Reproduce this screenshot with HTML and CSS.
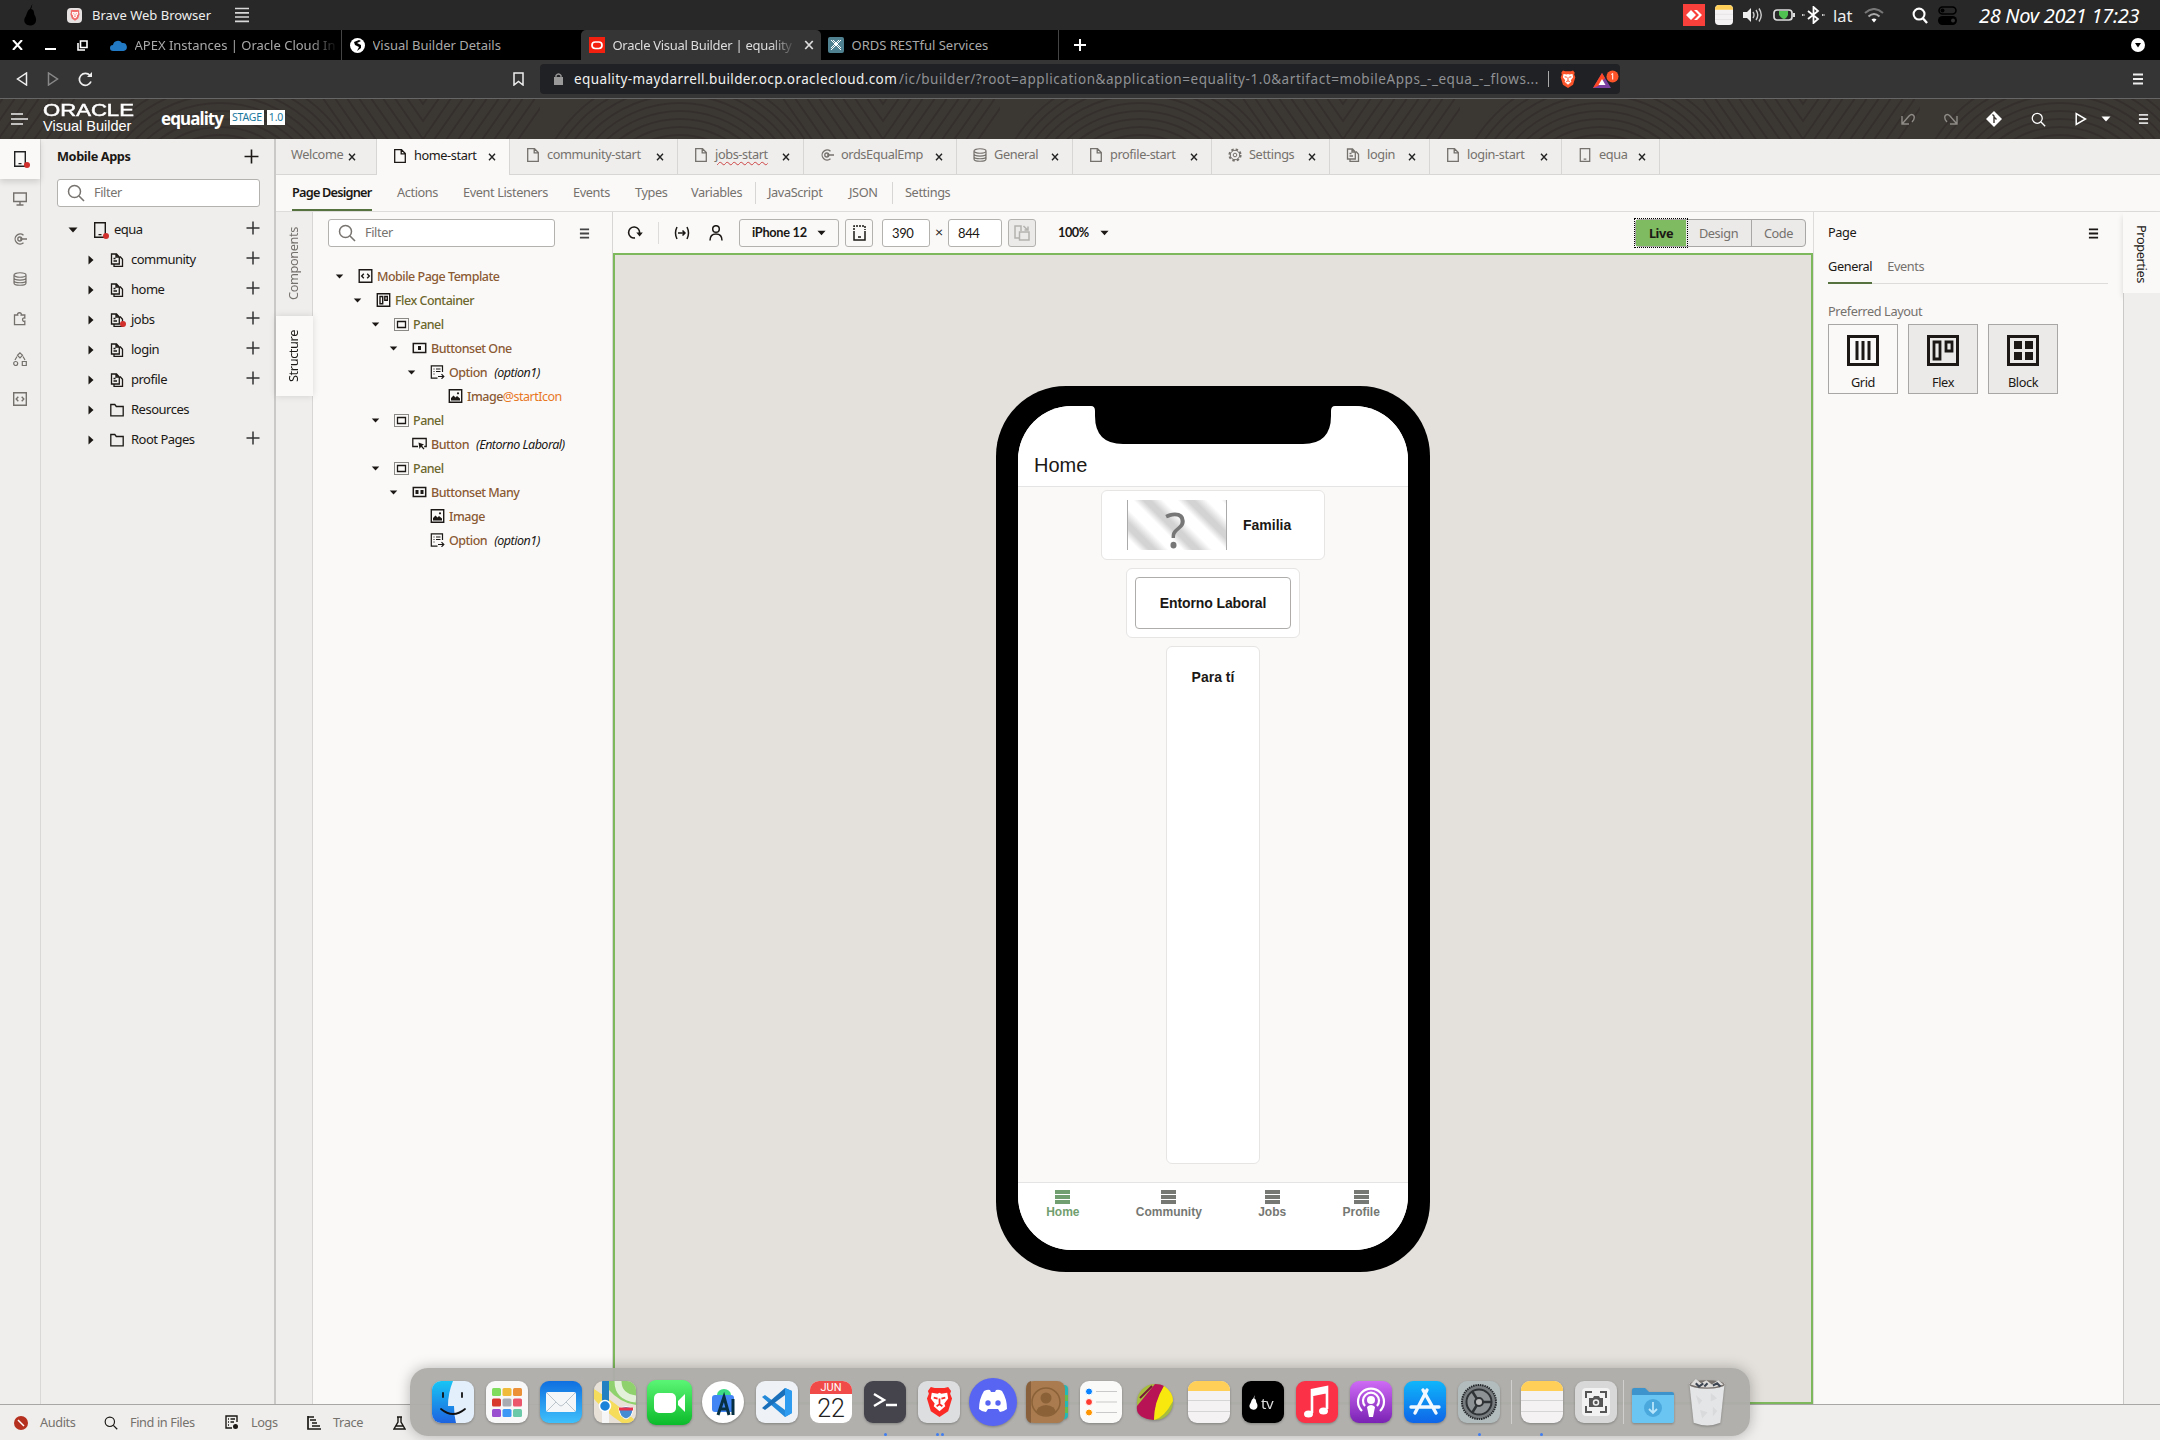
FILE: index.html
```html
<!DOCTYPE html>
<html lang="en">
<head>
<meta charset="utf-8">
<title>Oracle Visual Builder | equality</title>
<link rel="stylesheet" href="styles.css">
</head>
<body>
<svg class="defs" width="0" height="0" aria-hidden="true">
  <symbol id="page" viewBox="0 0 14 14"><path d="M1.700.7h6.800l3.800 3.800v8.800H1.700zM8.200.9v4h4" fill="none" stroke="currentColor" stroke-width="1.300"/></symbol>
  <symbol id="flow" viewBox="0 0 14 14"><path d="M1.500 1h5l2.800 3v7H1.500zM6 1v3h3M3.500 5.500h2M3.500 8h3.500M10 3.500l2.500 2.700v7.100H4v-2" fill="none" stroke="currentColor" stroke-width="1.300"/></symbol>
  <symbol id="service" viewBox="0 0 14 14"><path d="M10.500 3.300A5 5 0 1 0 10.500 10.700M7 7h7" fill="none" stroke="currentColor" stroke-width="1.300"/><circle cx="6.800" cy="7" r="2" fill="none" stroke="currentColor" stroke-width="1.300"/></symbol>
  <symbol id="data" viewBox="0 0 14 14"><path d="M1 3c0-3 12-3 12 0s-12 3-12 0v8c0 3 12 3 12 0V3M1 5.800c0 3 12 3 12 0M1 8.500c0 3 12 3 12 0" fill="none" stroke="currentColor" stroke-width="1.200"/></symbol>
  <symbol id="gear" viewBox="0 0 14 14"><circle cx="7" cy="7" r="5.600" fill="none" stroke="currentColor" stroke-width="2" stroke-dasharray="2.400 2"/><circle cx="7" cy="7" r="4.700" fill="none" stroke="currentColor"/><circle cx="7" cy="7" r="1.800" fill="none" stroke="currentColor"/></symbol>
  <symbol id="mobile" viewBox="0 0 14 18"><path d="M1.700 1.700h10.600v14.600H1.700zM5.500 13.600h3" fill="none" stroke="currentColor" stroke-width="1.400"/></symbol>
  <symbol id="folder" viewBox="0 0 14 14"><path d="M.8 12.800V1.500h4l1.500 2h6.900v9.300z" fill="none" stroke="currentColor" stroke-width="1.300"/></symbol>
  <symbol id="code" viewBox="0 0 14 14"><path d="M.7.7h12.600v12.600H.7zM5.300 4.800 3.200 7l2.100 2.200M8.700 4.800 10.800 7 8.700 9.200" fill="none" stroke="currentColor" stroke-width="1.400"/></symbol>
  <symbol id="flex" viewBox="0 0 14 14"><path d="M.8.8h12.400v12.400H.8zM3.500 3.500h2.700v7.300H3.500zM8.300 3.500h2.500v3.800H8.300z" fill="none" stroke="currentColor" stroke-width="1.400"/></symbol>
  <symbol id="panel" viewBox="0 0 15 13"><path d="M.5.5h14v12H.5z" fill="none" stroke="currentColor" stroke-dasharray="1 1"/><path d="M3.500 3.500h8v6h-8z" fill="none" stroke="currentColor" stroke-width="1.300"/></symbol>
  <symbol id="bone" viewBox="0 0 14 14"><path d="M.8 2.500h12.400v9H.8z" fill="none" stroke="currentColor" stroke-width="1.500"/><path d="M5.500 5h3v4h-3z"/></symbol>
  <symbol id="bmany" viewBox="0 0 14 14"><path d="M.8 2.500h12.400v9H.8z" fill="none" stroke="currentColor" stroke-width="1.500"/><path d="M3 5h3v4H3zM8 5h3v4H8z"/></symbol>
  <symbol id="option" viewBox="0 0 14 14"><path d="M12 7V.8H.8v12.400H7M3 4h1M5.500 4H10M3 6.500h1M5.500 6.500H10M3 9h1M7.500 11.500H13M11 9.200l2.300 2.300-2.300 2.300" fill="none" stroke="currentColor" stroke-width="1.200"/></symbol>
  <symbol id="image" viewBox="0 0 14 14"><path d="M.8.8h12.400v12.400H.8z" fill="none" stroke="currentColor" stroke-width="1.400"/><path d="M2.500 11.500V9l2.500-2.500 2 2L8.500 7l3 2.500v2z"/><circle cx="9.500" cy="4.300" r="1.100"/></symbol>
  <symbol id="button" viewBox="0 0 15 14"><path d="M6 9.500H.8v-8h13.400v8h-2" fill="none" stroke="currentColor" stroke-width="1.300"/><path d="m6.500 5.500 5.500 2-2 1.300 2.500 3-1 .8-2.500-2.800L7.500 12z"/></symbol>
  <symbol id="search" viewBox="0 0 18 18"><circle cx="7.500" cy="7.500" r="6" fill="none" stroke="currentColor" stroke-width="1.500"/><path d="m12 12 5 5" stroke="currentColor" stroke-width="1.600"/></symbol>
  <symbol id="menu" viewBox="0 0 12 12"><path d="M1 1.500h10M1 6h10M1 10.500h10" stroke="currentColor" stroke-width="2"/></symbol>
  <symbol id="down" viewBox="0 0 10 6"><path d="M.5.5h9L5 5.500z"/></symbol>
  <symbol id="right" viewBox="0 0 6 10"><path d="M.5.500v9L5.500 5z"/></symbol>
  <symbol id="plus" viewBox="0 0 14 14"><path d="M7 .5v13M.5 7h13" stroke="currentColor" stroke-width="1.500"/></symbol>
  <symbol id="x" viewBox="0 0 8 8"><path d="m1 .8 6 6.400M7 .8 1 7.200" stroke="currentColor" stroke-width="1.400"/></symbol>
  <symbol id="notes" viewBox="0 0 42 42"><rect width="42" height="42" rx="9" fill="#f4f2f3"/><path d="M0 10a9 9 0 0 1 9-10h24a9 9 0 0 1 9 10z" fill="#ffcf57"/><path d="M0 19.500h42M0 30.500h42" stroke="#d6d5d6"/></symbol>
  <symbol id="lion" viewBox="0 0 28 32"><path d="m5 1 4 1h10l4-1 3 4-1 3 2 5-4 13-9 6-9-6L1 13l2-5-1-3z"/><path d="m6 7 6 1 2-1 2 1 6-1 1 6-4 5 1 3-6 5-6-5 1-3-4-5z" fill="#fff"/><path d="m8 12 4 1M20 12l-4 1M14 13v6m-3 2 3-2 3 2" stroke="currentColor" stroke-width="1.800" fill="none"/></symbol>
  <symbol id="pear" viewBox="0 0 14 22"><path d="M8.500 0C7.500 2 8 4 7 5c3 0 3 4 3.500 6C13 14 13 21 7 21.500S-1 17 1 13.500C3 11 3 6 6 5 7 3 7 2 8.500 0z"/></symbol>
</svg>

<header class="osbar">
  <svg class="pear" width="14" height="22"><use href="#pear"/></svg>
  <span class="oslogo"><svg width="10" height="12"><use href="#lion"/></svg></span>
  <span class="osapp">Brave Web Browser</span>
  <svg width="14" height="16" viewBox="0 0 14 16"><path d="M0 1.500h14M0 5.800h14M0 10h14M0 14.300h14" stroke="#d8d8d8" stroke-width="1.700"/></svg>
  <div class="tray">
    <svg width="22" height="22" viewBox="0 0 22 22"><path fill="#f9403a" d="M0 0h22v22H0z"/><path d="m3 11 5-5 5 5-5 5zM11 6l5 5-5 5h3l5-5-5-5z" fill="#fff"/></svg>
    <svg width="18" height="20" preserveAspectRatio="none" viewBox="0 0 42 42"><use href="#notes" width="42" height="42"/></svg>
    <svg width="20" height="16" viewBox="0 0 20 16"><path d="M0 5h4l4-4v14l-4-4H0z" fill="#eee"/><path d="M10 5q2 3 0 6M13 3q3.500 5 0 10M16 1.500q4.500 6.500 0 13" stroke="#ccc" stroke-width="1.400" fill="none"/></svg>
    <svg width="23" height="14" viewBox="0 0 23 14"><rect x="1" y="2" width="18" height="10" rx="3" fill="none" stroke="#ddd" stroke-width="1.700"/><path d="M21 5v4" stroke="#ddd" stroke-width="2"/><path d="M6 3h9v4q-2 4-4 4T6 7z" fill="#4fc252"/></svg>
    <svg class="bt" width="23" height="18" viewBox="0 0 23 18"><path d="m6 5 10 8-4.500 4V1L16 5 6 13" fill="none" stroke="#fff" stroke-width="1.800"/><path d="M0 9h3M20 9h3" stroke="#ccc" stroke-width="2" stroke-dasharray="1.500 1"/></svg>
    <span class="lat">lat</span>
    <svg class="wifi" width="20" height="15" viewBox="0 0 20 15"><path d="M1 5q9-8 18 0" stroke="#777" stroke-width="2" fill="none"/><path d="M4.500 8.500q5.500-5 11 0" stroke="#aaa" stroke-width="2" fill="none"/><path d="M7.500 11.500q2.500-2 5 0L10 14.500z" fill="#fff"/></svg>
    <svg class="ossearch" width="16" height="17" viewBox="0 0 17 18"><circle cx="7.500" cy="7.500" r="5.800" fill="none" stroke="#fff" stroke-width="2.200"/><path d="m11.500 12 4.500 5" stroke="#fff" stroke-width="2.500"/></svg>
    <svg width="19" height="19" viewBox="0 0 19 19"><rect x="1" y="1" width="17" height="7" rx="3.500" fill="none" stroke="#000" stroke-width="1.600"/><circle cx="4.500" cy="4.500" r="2" fill="#000"/><rect y="10" width="19" height="9" rx="4.500" fill="#000"/><circle cx="15" cy="14.500" r="2" fill="#333"/></svg>
    <time class="clock">28 Nov 2021 17:23</time>
  </div>
</header>

<nav class="tabstrip">
  <svg class="win" width="11" height="10" viewBox="0 0 11 10"><path d="m1 0 9 10M10 0 1 10" stroke="#fff" stroke-width="2"/></svg>
  <svg class="win" width="11" height="10" viewBox="0 0 11 10"><path d="M0 9h11" stroke="#fff" stroke-width="2"/></svg>
  <svg class="win" width="11" height="11" viewBox="0 0 11 11"><path d="M3.500 1h6.500v6.500H3.500zM1 3v7h7" fill="none" stroke="#fff" stroke-width="1.600"/></svg>
  <div class="btab first"><svg width="17" height="11" viewBox="0 0 17 11"><path d="M3 11a3 3 0 0 1 0-6 5 5 0 0 1 9-2 4 4 0 0 1 1.500 8z" fill="#2279c4"/></svg><span class="fade">APEX Instances | Oracle Cloud In</span></div>
  <div class="btab second"><svg width="15" height="15" viewBox="0 0 15 15"><circle cx="7.500" cy="7.500" r="7.500" fill="#fff"/><path d="M9 2 4 4l1 3 4 2-2 4 4-3V7L7 5l4-2z" fill="#000"/></svg><span>Visual Builder Details</span></div>
  <div class="btab current"><svg width="16" height="16" viewBox="0 0 16 16"><path fill="#f4200f" d="M0 0h16v16H0z"/><rect x="3" y="5" width="10" height="6.500" rx="3.200" fill="none" stroke="#fff" stroke-width="1.700"/></svg><span class="fade">Oracle Visual Builder | equality</span><svg width="10" height="10"><use href="#x"/></svg></div>
  <div class="btab last"><svg width="16" height="16" viewBox="0 0 16 16"><rect width="16" height="16" rx="2" fill="#4f8190"/><path d="m3 3 10 10M13 3 3 13M5 3l8 8M3 11l8-8" stroke="#fff" fill="none"/></svg><span>ORDS RESTful Services</span></div>
  <svg class="newtab" width="12" height="12" viewBox="0 0 12 12"><path d="M6 0v12M0 6h12" stroke="#fff" stroke-width="2"/></svg>
  <svg class="tabmenu" width="14" height="14" viewBox="0 0 14 14"><circle cx="7" cy="7" r="7" fill="#fff"/><path d="M4 5h6L7 9.500z" fill="#000"/></svg>
</nav>

<div class="toolbar">
  <svg width="12" height="14" viewBox="0 0 12 14"><path d="M10.500 1v12L1.500 7z" fill="none" stroke="#eee" stroke-width="1.500"/></svg>
  <svg width="12" height="14" viewBox="0 0 12 14"><path d="M1.500 1v12l9-6z" fill="none" stroke="#888" stroke-width="1.500"/></svg>
  <svg width="15" height="15" viewBox="0 0 15 15"><path d="M13 9.500A6 6 0 1 1 12 3.500" fill="none" stroke="#eee" stroke-width="1.700"/><path d="M9 5h5V0z" fill="#eee"/></svg>
  <svg class="mark" width="11" height="14" viewBox="0 0 11 14"><path d="M1 1h9v12L5.500 9.500 1 13z" fill="none" stroke="#eee" stroke-width="1.500"/></svg>
  <div class="url">
    <svg width="9" height="12" viewBox="0 0 9 12"><path d="M0 4h9v8H0z" fill="#999"/><path d="M2 5V2.500q2.500-3 5 0V5" stroke="#999" stroke-width="1.300" fill="none"/></svg>
    <span class="host">equality-maydarrell.builder.ocp.oraclecloud.com</span><span class="path">/ic/builder/?root=application&amp;application=equality-1.0&amp;artifact=mobileApps_-_equa_-_flows...</span>
    <i class="bar"></i>
    <svg class="brave" width="16" height="18"><use href="#lion"/></svg>
    <svg class="bat" width="26" height="19" viewBox="0 0 26 19"><path d="m0 18 9-15 9 15z" fill="#7b3fa0"/><path d="M0 18 9 3l3 5-7 8z" fill="#ff4724"/><path d="m5.500 15 3.500-6 3.500 6z" fill="#fff"/><circle cx="19.500" cy="6.500" r="6" fill="#fb542b"/><path d="M19.700 9.500v-6l-1.500 1" stroke="#fff" fill="none"/></svg>
  </div>
  <svg class="bmenu" width="12" height="12"><use href="#menu"/></svg>
</div>

<header class="apphead">
  <svg class="waves" width="2160" height="40" viewBox="0 0 2160 40" aria-hidden="true">
    <defs><pattern id="w" x="80" width="460" height="40" patternUnits="userSpaceOnUse"><g fill="none" stroke="#342f2c" stroke-width="2"><circle cx="140" cy="120" r="84"/><circle cx="140" cy="120" r="92"/><circle cx="140" cy="120" r="100"/><circle cx="140" cy="120" r="108"/><circle cx="140" cy="120" r="116"/><circle cx="140" cy="120" r="124"/><circle cx="140" cy="120" r="132"/><circle cx="140" cy="120" r="140"/><circle cx="140" cy="120" r="148"/><path d="m240-5 35 50M252-5l35 50M264-5l35 50M276-5l35 50M288-5l35 50M300-5l35 50M312-5l31 45 31-45M324-5l19 27 19-27M336-5l7 10 7-10M386-5l-35 50M398-5l-35 50M410-5l-35 50M422-5l-35 50M434-5l-35 50M446-5l-35 50M458-5l-35 50M470-5l-35 50"/></g></pattern></defs>
    <rect width="2160" height="40" fill="url(#w)"/>
  </svg>
  <svg class="burger" width="17" height="12" viewBox="0 0 17 12"><path d="M0 1h12M0 6h17M0 11h12" stroke="#eee" stroke-width="1.500"/></svg>
  <div class="brand"><b>ORACLE</b><span>Visual Builder</span></div>
  <h1>equality</h1><span class="badge">STAGE</span><span class="badge">1.0</span>
  <div class="actions">
    <svg width="14" height="12" viewBox="0 0 14 12"><path d="M1 3v8h7M1.500 10.500 8 3q3-3 5 0 1 3-2 6" fill="none" stroke="#8f8b87" stroke-width="1.400"/></svg>
    <svg width="14" height="12" viewBox="0 0 14 12"><path d="M13 3v8H6M12.500 10.500 6 3Q3 0 1 3q-1 3 2 6" fill="none" stroke="#8f8b87" stroke-width="1.400"/></svg>
    <svg width="16" height="16" viewBox="0 0 16 16"><path d="m8 0 8 8-8 8-8-8z" fill="#fff"/><path d="M6.500 3.500 8 5v7M8 6l2.500 2.500" fill="none" stroke="#3a3632" stroke-width="1.400"/></svg>
    <svg width="15" height="15"><use href="#search"/></svg>
    <svg width="12" height="14" viewBox="0 0 12 14"><path d="M1.200 1.500v11L10.500 7z" fill="none" stroke="#fff" stroke-width="1.500"/></svg>
    <svg class="drop" width="10" height="6"><use href="#down"/></svg>
    <svg class="more" width="11" height="12"><use href="#menu"/></svg>
  </div>
</header>

<main class="work">
  <nav class="rail">
    <span class="on"><svg width="14" height="18"><use href="#mobile"/></svg><i class="dot"></i></span>
    <span><svg width="14" height="14" viewBox="0 0 14 14"><path d="M.7 1h12.600v8.500H.7zM7 9.500V13M3.500 13h7" fill="none" stroke="currentColor" stroke-width="1.400"/></svg></span>
    <span><svg width="14" height="14"><use href="#service"/></svg></span>
    <span><svg width="14" height="14"><use href="#data"/></svg></span>
    <span><svg width="14" height="14" viewBox="0 0 14 14"><path d="M1.500 3h3.200c-1-3 4.500-3 3.500 0h3.600v3c-3-.8-3 4 0 3.200v3.500H1.500z" fill="none" stroke="currentColor" stroke-width="1.300"/></svg></span>
    <span><svg width="14" height="14" viewBox="0 0 14 14"><path d="m7 .8 2.500 2.500L7 5.800 4.500 3.300zM9.300 9.500h4v4h-4zM4 4.500 2 8M10 4.500 12 8" fill="none" stroke="currentColor" stroke-width="1.200"/><circle cx="2.700" cy="11.500" r="2" fill="none" stroke="currentColor" stroke-width="1.200"/></svg></span>
    <span><svg width="14" height="14"><use href="#code"/></svg></span>
  </nav>

  <aside class="apps">
    <div class="appstitle"><b>Mobile Apps</b><svg width="15" height="15"><use href="#plus"/></svg></div>
    <div class="filter"><svg width="18" height="18"><use href="#search"/></svg>Filter</div>
    <ul class="tree">
      <li class="root"><svg class="tw" width="10" height="6"><use href="#down"/></svg><span class="ic"><svg width="14" height="18"><use href="#mobile"/></svg><i class="dot"></i></span>equa<svg class="add" width="14" height="14"><use href="#plus"/></svg></li>
      <li><svg class="tw" width="6" height="10"><use href="#right"/></svg><span class="ic"><svg width="14" height="14"><use href="#flow"/></svg></span>community<svg class="add" width="14" height="14"><use href="#plus"/></svg></li>
      <li><svg class="tw" width="6" height="10"><use href="#right"/></svg><span class="ic"><svg width="14" height="14"><use href="#flow"/></svg></span>home<svg class="add" width="14" height="14"><use href="#plus"/></svg></li>
      <li><svg class="tw" width="6" height="10"><use href="#right"/></svg><span class="ic"><svg width="14" height="14"><use href="#flow"/></svg><i class="dot"></i></span>jobs<svg class="add" width="14" height="14"><use href="#plus"/></svg></li>
      <li><svg class="tw" width="6" height="10"><use href="#right"/></svg><span class="ic"><svg width="14" height="14"><use href="#flow"/></svg></span>login<svg class="add" width="14" height="14"><use href="#plus"/></svg></li>
      <li><svg class="tw" width="6" height="10"><use href="#right"/></svg><span class="ic"><svg width="14" height="14"><use href="#flow"/></svg></span>profile<svg class="add" width="14" height="14"><use href="#plus"/></svg></li>
      <li><svg class="tw" width="6" height="10"><use href="#right"/></svg><span class="ic"><svg width="14" height="14"><use href="#folder"/></svg></span>Resources</li>
      <li><svg class="tw" width="6" height="10"><use href="#right"/></svg><span class="ic"><svg width="14" height="14"><use href="#folder"/></svg></span>Root Pages<svg class="add" width="14" height="14"><use href="#plus"/></svg></li>
    </ul>
  </aside>

  <section class="editor">
    <nav class="etabs">
      <span class="t1">Welcome<svg class="x" width="8" height="8"><use href="#x"/></svg></span>
      <span class="t2 active"><svg width="14" height="14"><use href="#page"/></svg>home-start<svg class="x" width="8" height="8"><use href="#x"/></svg></span>
      <span class="t3"><svg width="14" height="14"><use href="#page"/></svg>community-start<svg class="x" width="8" height="8"><use href="#x"/></svg></span>
      <span class="t4"><svg width="14" height="14"><use href="#page"/></svg><u>jobs-start</u><svg class="x" width="8" height="8"><use href="#x"/></svg></span>
      <span class="t5"><svg width="14" height="14"><use href="#service"/></svg>ordsEqualEmp<svg class="x" width="8" height="8"><use href="#x"/></svg></span>
      <span class="t6"><svg width="14" height="14"><use href="#data"/></svg>General<svg class="x" width="8" height="8"><use href="#x"/></svg></span>
      <span class="t7"><svg width="14" height="14"><use href="#page"/></svg>profile-start<svg class="x" width="8" height="8"><use href="#x"/></svg></span>
      <span class="t8"><svg width="14" height="14"><use href="#gear"/></svg>Settings<svg class="x" width="8" height="8"><use href="#x"/></svg></span>
      <span class="t9"><svg width="14" height="14"><use href="#flow"/></svg>login<svg class="x" width="8" height="8"><use href="#x"/></svg></span>
      <span class="t10"><svg width="14" height="14"><use href="#page"/></svg>login-start<svg class="x" width="8" height="8"><use href="#x"/></svg></span>
      <span class="t11"><svg width="14" height="16"><use href="#mobile"/></svg>equa<svg class="x" width="8" height="8"><use href="#x"/></svg></span>
    </nav>
    <nav class="subtabs">
      <span class="s1 on">Page Designer</span><span class="s2">Actions</span><span class="s3">Event Listeners</span><span class="s4">Events</span><span class="s5">Types</span><span class="s6">Variables</span><i></i><span class="s7">JavaScript</span><span class="s8">JSON</span><i></i><span class="s9">Settings</span>
    </nav>
    <div class="panes">
      <nav class="vtabs"><span class="comp">Components</span><span class="struct">Structure</span><div class="rest"></div></nav>
      <aside class="structure">
        <div class="sfilter"><div class="filter"><svg width="18" height="18"><use href="#search"/></svg>Filter</div><svg class="smenu" width="11" height="11"><use href="#menu"/></svg></div>
        <ul class="stree">
          <li class="l0"><svg class="tw" width="9" height="5"><use href="#down"/></svg><svg class="i" width="14" height="14"><use href="#code"/></svg>Mobile Page Template</li>
          <li class="l1 olive"><svg class="tw" width="9" height="5"><use href="#down"/></svg><svg class="i" width="14" height="14"><use href="#flex"/></svg>Flex Container</li>
          <li class="l2 olive"><svg class="tw" width="9" height="5"><use href="#down"/></svg><svg class="i" width="15" height="13"><use href="#panel"/></svg>Panel</li>
          <li class="l3"><svg class="tw" width="9" height="5"><use href="#down"/></svg><svg class="i" width="14" height="14"><use href="#bone"/></svg>Buttonset One</li>
          <li class="l4"><svg class="tw" width="9" height="5"><use href="#down"/></svg><svg class="i" width="14" height="14"><use href="#option"/></svg>Option<em>(option1)</em></li>
          <li class="l5"><b class="tw"></b><svg class="i" width="14" height="14"><use href="#image"/></svg>Image<span class="slot">@startIcon</span></li>
          <li class="l2 olive"><svg class="tw" width="9" height="5"><use href="#down"/></svg><svg class="i" width="15" height="13"><use href="#panel"/></svg>Panel</li>
          <li class="l3"><b class="tw"></b><svg class="i" width="15" height="14"><use href="#button"/></svg>Button<em>(Entorno Laboral)</em></li>
          <li class="l2 olive"><svg class="tw" width="9" height="5"><use href="#down"/></svg><svg class="i" width="15" height="13"><use href="#panel"/></svg>Panel</li>
          <li class="l3"><svg class="tw" width="9" height="5"><use href="#down"/></svg><svg class="i" width="14" height="14"><use href="#bmany"/></svg>Buttonset Many</li>
          <li class="l4"><b class="tw"></b><svg class="i" width="14" height="14"><use href="#image"/></svg>Image</li>
          <li class="l4"><b class="tw"></b><svg class="i" width="14" height="14"><use href="#option"/></svg>Option<em>(option1)</em></li>
        </ul>
      </aside>
      <section class="design">
        <div class="dbar">
          <svg class="reload" width="16" height="15" viewBox="0 0 16 15"><path d="M8 12.900A5.500 5.500 0 1 1 12.500 8.500" fill="none" stroke="currentColor" stroke-width="1.600"/><path d="M9.300 7.500h6.500l-3.200 4z"/></svg>
          <i class="sep"></i>
          <svg class="arrows" width="16" height="14" viewBox="0 0 16 14"><path d="M3 1Q0 7 3 13M13 1q3 6 0 12M4 7h7M8.500 4.500 11 7 8.500 9.500" fill="none" stroke="currentColor" stroke-width="1.500"/></svg>
          <svg class="person" width="14" height="16" viewBox="0 0 14 16"><circle cx="7" cy="4" r="3.300" fill="none" stroke="currentColor" stroke-width="1.500"/><path d="M1 15.500q0-6.500 6-6.500t6 6.500" fill="none" stroke="currentColor" stroke-width="1.500"/></svg>
          <span class="select">iPhone 12<svg width="9" height="6"><use href="#down"/></svg></span>
          <span class="sq"><svg width="13" height="16" viewBox="0 0 13 16"><path d="M1 6v9h11V6M5 12h3" fill="none" stroke="currentColor" stroke-width="1.500"/><path d="M1 5V1h11v4" fill="none" stroke="currentColor" stroke-width="1.500" stroke-dasharray="2 1"/></svg></span>
          <span class="num">390</span><span class="times">×</span><span class="num wide">844</span>
          <span class="sq off"><svg width="16" height="16" viewBox="0 0 16 16"><path d="M6 13H1V1h6v5M5.500 7h9.500v8H5.500zM9.500 1l4 4M14 1.500V5h-3.500" fill="none" stroke="currentColor" stroke-width="1.500"/></svg></span>
          <span class="zoom">100%</span><svg width="9" height="6"><use href="#down"/></svg>
          <div class="modes"><b>Live</b><span>Design</span><span>Code</span></div>
        </div>
        <div class="canvas">
          <div class="phone"><div class="screen">
            <div class="phead"><svg class="notch" width="244" height="38" viewBox="0 0 244 38"><path d="M0 0h244q-4 0-4 5v5q0 28-28 28H32Q4 38 4 10V5q0-5-4-5z" fill="#000"/></svg><span>Home</span></div>
            <div class="pbody">
              <div class="card c1"><div class="missing">?</div>Familia</div>
              <div class="card c2"><span>Entorno Laboral</span></div>
              <div class="card c3">Para tí</div>
            </div>
            <nav class="ptabs">
              <span class="on"><svg width="15" height="14" viewBox="0 0 15 14"><path d="M0 0h15v4H0zM0 5h15v4H0zM0 10h15v4H0z"/></svg>Home</span>
              <span><svg width="15" height="14" viewBox="0 0 15 14"><path d="M0 0h15v4H0zM0 5h15v4H0zM0 10h15v4H0z"/></svg>Community</span>
              <span><svg width="15" height="14" viewBox="0 0 15 14"><path d="M0 0h15v4H0zM0 5h15v4H0zM0 10h15v4H0z"/></svg>Jobs</span>
              <span><svg width="15" height="14" viewBox="0 0 15 14"><path d="M0 0h15v4H0zM0 5h15v4H0zM0 10h15v4H0z"/></svg>Profile</span>
            </nav>
          </div></div>
        </div>
      </section>
      <aside class="props">
        <div class="ptitle">Page<svg width="11" height="11"><use href="#menu"/></svg></div>
        <nav class="pnav"><span class="on">General</span><span>Events</span></nav>
        <label>Preferred Layout</label>
        <div class="layouts">
          <span class="sel"><svg width="32" height="31" viewBox="0 0 32 31"><path d="M1.500 1.500h29v28h-29z" fill="none" stroke="currentColor" stroke-width="3"/><path d="M10 6v19M16 6v19M22 6v19" stroke="currentColor" stroke-width="3"/></svg>Grid</span>
          <span><svg width="32" height="31" viewBox="0 0 32 31"><path d="M1.500 1.500h29v28h-29z" fill="none" stroke="currentColor" stroke-width="3"/><path d="M7 7h6v17H7zM19 7h6v9h-6z" fill="none" stroke="currentColor" stroke-width="2.800"/></svg>Flex</span>
          <span><svg width="32" height="31" viewBox="0 0 32 31"><path d="M1.500 1.500h29v28h-29z" fill="none" stroke="currentColor" stroke-width="3"/><path d="M7 6h8v8H7zM18 6h8v8h-8zM7 17h8v8H7zM18 17h8v8h-8z"/></svg>Block</span>
        </div>
      </aside>
      <nav class="ptab"><span>Properties</span><div></div></nav>
    </div>
  </section>
</main>

<footer class="status">
  <svg width="14" height="14" viewBox="0 0 14 14"><circle cx="7" cy="7" r="7" fill="#b5301f"/><path d="m4 4 6 6" stroke="#fff" stroke-width="1.500"/></svg><span class="f1">Audits</span>
  <svg width="14" height="14"><use href="#search"/></svg><span class="f2">Find in Files</span>
  <svg width="14" height="15" viewBox="0 0 14 15"><path d="M12 7V1H1v12h6M3 4h1M5.500 4H10M3 7h1M5.500 7H9M3 10h1" fill="none" stroke="currentColor" stroke-width="1.400"/><circle cx="10.500" cy="11.500" r="2.500"/></svg><span class="f3">Logs</span>
  <svg width="14" height="14" viewBox="0 0 14 14"><path d="M1 0v13h13M1 1h6M3 4h6M5 7h5M5 10h8" fill="none" stroke="currentColor" stroke-width="1.700"/></svg><span class="f4">Trace</span>
  <svg width="13" height="14" viewBox="0 0 13 14"><path d="M4 1h5M5 1v5l-4 7h11L8 6V1M3 10h7" fill="none" stroke="currentColor" stroke-width="1.400"/></svg>
</footer>

<nav class="dock">
  <span><svg viewBox="0 0 42 42"><defs><linearGradient id="fb" x2="0" y2="1"><stop stop-color="#18c5f5"/><stop offset="1" stop-color="#1d63df"/></linearGradient><linearGradient id="mb" x2="0" y2="1"><stop stop-color="#0f6fe0"/><stop offset="1" stop-color="#3fc0fb"/></linearGradient><linearGradient id="gb" x2="0" y2="1"><stop stop-color="#5bf575"/><stop offset="1" stop-color="#0bbb2a"/></linearGradient><linearGradient id="pb" x2="0" y2="1"><stop stop-color="#cf6bf5"/><stop offset="1" stop-color="#7a22b4"/></linearGradient><linearGradient id="ab" x2="0" y2="1"><stop stop-color="#0fb6fb"/><stop offset="1" stop-color="#0f65e8"/></linearGradient><clipPath id="r"><rect width="42" height="42" rx="9"/></clipPath></defs><g clip-path="url(#r)"><path fill="#e4effc" d="M0 0h42v42H0z"/><path d="M0 0h21q-5 12-5 25h6q0 9 2 17H0z" fill="url(#fb)"/></g><path d="M11 12v4M30 12v4M9 28q12 10 24 0" stroke="#111" stroke-width="1.800" fill="none" stroke-linecap="round"/></svg></span>
  <span><svg viewBox="0 0 42 42"><rect width="42" height="42" rx="9" fill="#f8f8f9"/><rect x="6" y="7" width="9" height="8" rx="1.500" fill="#7fdc5c"/><rect x="16.500" y="7" width="9" height="8" rx="1.500" fill="#f0bb3a"/><rect x="27" y="7" width="9" height="8" rx="1.500" fill="#ec9138"/><rect x="6" y="17.500" width="9" height="8" rx="1.500" fill="#d8382c"/><rect x="16.500" y="17.500" width="9" height="8" rx="1.500" fill="#a8acb2"/><rect x="27" y="17.500" width="9" height="8" rx="1.500" fill="#ec566c"/><rect x="6" y="28" width="9" height="8" rx="1.500" fill="#9a4fd0"/><rect x="16.500" y="28" width="9" height="8" rx="1.500" fill="#3c97f5"/><rect x="27" y="28" width="9" height="8" rx="1.500" fill="#69c9a8"/></svg></span>
  <span><svg viewBox="0 0 42 42"><rect width="42" height="42" rx="9" fill="url(#mb)"/><rect x="6" y="11" width="30" height="20" rx="2" fill="#f4f6f8"/><path d="m7 12 12 12q2 2 4 0l12-12M7 30l9-9M35 30l-9-9" fill="none" stroke="#bcc4cc"/></svg></span>
  <span><svg viewBox="0 0 42 42"><g clip-path="url(#r)"><path fill="#e8e1d8" d="M0 0h42v42H0z"/><path d="M14 0h28v24Q26 22 14 8z" fill="#8fd16c"/><path d="M24 0q0 16 18 18" stroke="#e3f0da" stroke-width="7" fill="none"/><path d="M0 8q22 14 42 32v2H28Q10 30 0 18z" fill="#f5dc5a"/><path d="M8 0h7v42H8z" fill="#f6f6f6"/><path d="M8 0h7v25H8z" fill="#2180c2"/></g><circle cx="11" cy="25" r="5.500" fill="#1d85d9" stroke="#fff" stroke-width="1.500"/><path d="M25 27q7-3 14 0 0 9-7 11-7-2-7-11z" fill="#438bd3" stroke="#fff"/><path d="M25 28h14" stroke="#e6324d" stroke-width="3"/></svg></span>
  <span><svg class="big" viewBox="0 0 45 45"><rect width="45" height="45" rx="9" fill="url(#gb)"/><rect x="7" y="13" width="22" height="20" rx="5" fill="#fff"/><path d="m31 21 7-7v18l-7-7z" fill="#fff"/></svg></span>
  <span><svg viewBox="0 0 42 42"><circle cx="21" cy="21" r="21" fill="#fff"/><rect x="10" y="14" width="22" height="17" rx="3" fill="#4285f4"/><path d="M15 14a7 6 0 0 1 14 0z" fill="#3ddc84"/><path d="m16 34 6-18 5 18M17 28h9M31 18v16" stroke="#073042" stroke-width="3" fill="none"/></svg></span>
  <span><svg viewBox="0 0 42 42"><rect width="42" height="42" rx="9" fill="#eef1f5"/><path d="m29 7 7 3v22l-7 4L6 16l3-2 20 15z" fill="#2489d8"/><path d="m6 27 3 2 20-15V7z" fill="#1a6fba"/><path d="m29 7 7 3v22l-7 4z" fill="#2c9bf0"/></svg></span>
  <span class="cal"><b>JUN</b><i>22</i></span>
  <span><svg viewBox="0 0 42 42"><rect width="42" height="42" rx="9" fill="#45434c"/><path d="m10 13 10 6-10 6M22 24h11" stroke="#fff" stroke-width="2.400" fill="none"/></svg></span>
  <span><svg viewBox="0 0 42 42"><rect width="42" height="42" rx="9" fill="#dcdee0"/><g fill="#fb2a25" color="#fb2a25"><use href="#lion" x="8" y="5" width="27" height="31"/></g></svg></span>
  <span><svg class="huge" viewBox="0 0 48 48"><circle cx="24" cy="24" r="24" fill="#5865f2"/><path d="M15 13q4-2 6-1l1 2h4l1-2q3-1 6 1 5 8 5 18-4 3-7 3l-2-3H19l-2 3q-4 0-7-3 0-10 5-18z" fill="#fff"/><circle cx="19" cy="25" r="2.700" fill="#5865f2"/><circle cx="29" cy="25" r="2.700" fill="#5865f2"/></svg></span>
  <span><svg viewBox="0 0 42 42"><rect x="2" y="4" width="40" height="34" rx="4" fill="#23b7b5"/><path d="M30 14h12v6H30zM30 26h12v6H30z" fill="#65bc4d"/><rect width="39" height="42" rx="8" fill="#a97b4f"/><path d="M0 9q0-8 5-9v42q-5-1-5-9z" fill="#88603b"/><circle cx="20" cy="21" r="14" fill="none" stroke="#8b6238" stroke-width="1.500"/><circle cx="20" cy="17" r="5.500" fill="#8b6238"/><path d="M10 31q1-6 10-7 9 1 10 7-10 7-20 0z" fill="#8b6238"/></svg></span>
  <span><svg viewBox="0 0 42 42"><rect width="42" height="42" rx="9" fill="#fafaf8"/><path d="M16 10.500h21M16 21h21M16 31.500h21" stroke="#c9c9c9"/><g stroke="#fff"><circle cx="9" cy="10.500" r="3.500" fill="#0a84ff"/><circle cx="9" cy="21" r="3.500" fill="#ff3b30"/><circle cx="9" cy="31.500" r="3.500" fill="#ff9500"/></g></svg></span>
  <span><svg viewBox="0 0 42 42"><g transform="translate(3 3)"><circle cx="18" cy="18" r="18" fill="#a6bd3e"/><path d="M18 0q6 0 9 2Q18 18 17 36-2 34 0 22z" fill="#b81455"/><path d="M27 2q9 6 9 15-9 17-19 19 0-18 10-34z" fill="#f8e80e"/><path d="M3 14 15 2" stroke="#7b1838" stroke-width="2"/></g></svg></span>
  <span><svg viewBox="0 0 42 42"><use href="#notes"/></svg></span>
  <span><svg viewBox="0 0 42 42"><rect width="42" height="42" rx="9" fill="#000"/><g fill="#fff"><use href="#pear" x="7" y="14" width="10" height="15"/></g><text x="19" y="28" class="tv">tv</text></svg></span>
  <span><svg viewBox="0 0 42 42"><rect width="42" height="42" rx="9" fill="#fb3148"/><path d="M16 32V9l15-3v22M16 14l15-3" stroke="#fff" stroke-width="2.600" fill="none"/><path d="M16 8.500 31 6v5l-15 3z" fill="#fff"/><ellipse cx="12.500" cy="33" rx="4.500" ry="3.500" fill="#fff"/><ellipse cx="27.500" cy="30" rx="4.500" ry="3.500" fill="#fff"/></svg></span>
  <span><svg viewBox="0 0 42 42"><rect width="42" height="42" rx="9" fill="url(#pb)"/><path d="M12 30a13 13 0 1 1 18 0M15 25a8 8 0 1 1 12 0" fill="none" stroke="#fff" stroke-width="2.200"/><circle cx="21" cy="19" r="4" fill="#fff"/><path d="M17 26q4-4 8 0l-2 10h-4z" fill="#fff"/></svg></span>
  <span><svg viewBox="0 0 42 42"><rect width="42" height="42" rx="9" fill="url(#ab)"/><path d="m23 9-12 23M19 9l13 23M7 26h28" stroke="#f1f8ff" stroke-width="3.400" fill="none" stroke-linecap="round"/></svg></span>
  <span><svg viewBox="0 0 42 42"><rect width="42" height="42" rx="9" fill="#b2bcbd"/><circle cx="21" cy="21" r="17" fill="#777c7e" stroke="#282b2d" stroke-width="2" stroke-dasharray="1.500 .8"/><circle cx="21" cy="21" r="12.500" fill="#8d9394" stroke="#303336" stroke-width="2"/><circle cx="21" cy="21" r="4" fill="#bbb" stroke="#303336" stroke-width="2"/><path d="M25 21h9M19 18l-5-8M19 24l-5 8" stroke="#303336" stroke-width="2.500"/></svg></span>
  <i class="div"></i>
  <span><svg viewBox="0 0 42 42"><use href="#notes"/></svg></span>
  <span><svg viewBox="0 0 42 42"><rect width="42" height="42" rx="9" fill="#d8d8d8"/><rect x="7" y="7" width="28" height="28" rx="4" fill="#f2f2f2"/><path d="M11 17v-6h6M25 11h6v6M31 25v6h-6M17 31h-6v-6" fill="none" stroke="#555" stroke-width="2"/><path d="M14 17h4l1-2h5l1 2h3v9H14z" fill="#555"/><circle cx="21" cy="21.500" r="2.500" fill="none" stroke="#f2f2f2" stroke-width="1.500"/></svg></span>
  <i class="div thin"></i>
  <span><svg viewBox="0 0 42 42"><path d="M0 9q0-2 2-2h11l4 4h23q2 0 2 2v8H0z" fill="#3d94cc"/><path d="M0 14h42v26q0 2-2 2H2q-2 0-2-2z" fill="#6bc5f2"/><circle cx="21" cy="27" r="9" fill="#4aa8dd"/><path d="M21 21v11m-4-4 4 4 4-4" stroke="#b8e5fb" stroke-width="1.800" fill="none"/></svg></span>
  <span><svg class="huge" viewBox="0 0 45 45"><path d="M6 5h33l-4 37q-12 5-25 0z" fill="#e4e5e6"/><ellipse cx="22.500" cy="6" rx="16.500" ry="4" fill="#77716d"/><path d="m7 6 5-5 5 4 5-3 5 4 6-4 5 4q-15 6-31 0z" fill="#dedcda"/><path d="m12 5 3 3 4-3M20 8l3-3M28 7l4-2 3 3" stroke="#3d4552" stroke-width="2" fill="none"/><path d="m12 16 6 5-3 4zM26 14l6 5-6 3zM16 30l7 2-5 6zM28 27l4 4-4 5z" fill="#d8dadb"/></svg></span>
  <b class="run r1"></b><b class="run r2"></b><b class="run r3"></b><b class="run r4"></b><b class="run r5"></b>
</nav>
</body>
</html>
```
FILE: styles.css
```css
* { box-sizing: border-box; }
body { margin: 0; width: 2160px; height: 1440px; overflow: hidden; display: flex; flex-direction: column; position: relative; font: 12.75px/1.2 "Noto Sans", "Open Sans", sans-serif; letter-spacing: -.4px; color: #1b1815; white-space: nowrap; background: #efeeec; }
svg { flex: none; fill: currentColor; }
.defs { position: absolute; }
ul { list-style: none; margin: 0; padding: 0; }
i, em { font-style: normal; }

.osbar { height: 30px; flex: none; background: #282828; color: #eee; display: flex; align-items: center; padding-left: 24px; font: 13px "Noto Sans", sans-serif; letter-spacing: 0; }
.pear { color: #000; margin-right: 29px; }
.oslogo { width: 15px; height: 15px; border-radius: 4px; background: #e6e2e2; color: #f06a6a; display: flex; align-items: center; justify-content: center; margin-right: 10px; }
.osapp { width: 143px; }
.tray { margin-left: auto; display: flex; align-items: center; gap: 10px; }
.bt { margin: 0 -2px 0 -4px; }
.lat { font-size: 16.5px; width: 21px; }
.wifi { margin-right: 18px; }
.clock { font: italic 20px "Noto Sans", sans-serif; letter-spacing: -.3px; width: 181px; margin-left: 12px; color: #fff; }

.tabstrip { height: 30px; flex: none; background: #000; color: #fff; display: flex; align-items: center; padding-left: 12px; font: 13px "Noto Sans", sans-serif; letter-spacing: 0; }
.win { margin-right: 21.5px; }
.btab { height: 30px; display: flex; align-items: center; gap: 8px; color: #a9a9a9; padding-left: 8px; }
.btab span { overflow: hidden; }
.first { width: 232px; border-right: 1px solid #444; padding: 0 3px 0 0; }
.first .fade { width: 206px; }
.second { width: 239px; }
.current { width: 240px; background: #353535; color: #ddd; border-radius: 5px 5px 0 0; }
.current .fade { width: 183px; letter-spacing: -.3px; }
.fade { mask-image: linear-gradient(90deg, #000 86%, transparent); }
.last { width: 238px; border-right: 1px solid #444; padding-left: 7px; }
.newtab { margin-left: 15px; }
.tabmenu { margin: 0 15px 0 auto; }

.toolbar { height: 39px; flex: none; background: #353535; border-bottom: 1px solid #666; display: flex; align-items: center; padding-left: 16px; gap: 19px; color: #eee; font: 13.5px "Noto Sans", sans-serif; }
.mark { margin-left: 401px; }
.url { width: 1080px; height: 30px; margin-left: -3px; border-radius: 4px; background: #202124; display: flex; align-items: center; padding-left: 14px; color: #f1f1f1; }
.host { margin-left: 11px; width: 325px; letter-spacing: .4px; }
.path { color: #8f9194; width: 640px; letter-spacing: .56px; }
.bar { width: 1px; height: 16px; background: #aaa; margin: 0 11px 0 9px; }
.brave { color: #fb542b; margin-right: 17px; }
.bmenu { margin: 0 16px 0 auto; }

.apphead { height: 40px; flex: none; background: #3b3733; color: #fff; display: flex; align-items: center; padding-left: 11px; position: relative; }
.waves { position: absolute; left: 0; top: 0; }
.apphead > :not(.waves) { position: relative; }
.brand { margin-left: 15px; width: 118px; display: flex; flex-direction: column; font-family: "Liberation Sans", sans-serif; letter-spacing: 0; line-height: 1; }
.brand b { font: 17px/15px "Liberation Sans", sans-serif; -webkit-text-stroke: .5px #fff; transform: scaleX(1.3); transform-origin: 0 0; }
.brand span { font-size: 14.5px; line-height: 17px; }
.apphead h1 { font-size: 17px; margin: 0; width: 69px; letter-spacing: -.9px; }
.badge { background: #fff; color: #1a789e; font-size: 10.5px; height: 15px; line-height: 14px; padding: 0 2px; margin: -3px 3px 0 0; letter-spacing: -.2px; }
.actions { margin-left: auto; display: flex; align-items: center; width: 259px; gap: 28.7px; }
.drop { margin-left: -14px; }
.more { margin-left: -2px; color: #ddd; }

.work { flex: 1; display: flex; min-height: 0; }
.rail { width: 41px; border-right: 1px solid #dad8d6; display: flex; flex-direction: column; color: #75716d; }
.rail span { height: 40px; display: flex; align-items: center; justify-content: center; position: relative; }
.rail .on { background: #faf9f8; color: #222; box-shadow: 0 3px 6px #0002; }
.dot { position: absolute; width: 6px; height: 6px; border-radius: 50%; background: #d12f2b; }
.rail .dot { left: 24px; top: 23px; }
.apps { width: 235px; border-right: 2px solid #cbc9c7; }
.appstitle { height: 35px; padding: 0 15px 0 16px; display: flex; align-items: center; justify-content: space-between; }
.filter { height: 28px; background: #fff; border: 1px solid #b4b2af; border-radius: 3px; display: flex; align-items: center; gap: 9px; padding-left: 9px; color: #77736f; }
.apps .filter { margin: 5px 14px 0 16px; }
.tree { padding-top: 8px; font-size: 13px; letter-spacing: -.5px; }
.tree li { height: 30px; display: flex; align-items: center; padding: 0 14px 0 45px; }
.tree .root { padding-left: 27px; }
.tree .tw { width: 10px; margin-right: 14px; }
.tree .root .tw { margin-right: 12px; }
.tree .ic { display: flex; position: relative; width: 21px; }
.tree .root .ic { margin-left: 3px; width: 21px; }
.tree .dot { left: 10px; bottom: 0; }
.add { margin: -5px 0 0 auto; color: #333; }

.editor { flex: 1; display: flex; flex-direction: column; min-width: 0; background: #faf9f8; }
.etabs { height: 36px; flex: none; background: #efeeec; border-bottom: 1px solid #d8d6d4; display: flex; color: #75716d; }
.etabs span { display: flex; align-items: center; padding: 0 13px 3px 16px; border-right: 1px solid #d8d6d4; }
.etabs span > svg:first-child { margin-right: 7px; }
.etabs .x { margin: 3px 0 0 auto; color: #222; }
.etabs .t1 { width: 101px; padding-left: 15px; }
.etabs .active { background: #faf9f8; color: #1b1815; height: 36px; }
.t2 { width: 133px; } .t3 { width: 168px; } .t4 { width: 126px; } .t5 { width: 153px; } .t6 { width: 116px; } .t7 { width: 139px; } .t8 { width: 118px; } .t9 { width: 100px; } .t10 { width: 132px; } .t11 { width: 98px; }
.etabs u { text-decoration: underline wavy #c44 1px; text-underline-offset: 2px; }
.subtabs { height: 37px; flex: none; border-bottom: 1px solid #dedcda; display: flex; align-items: center; padding-left: 16px; color: #75716d; }
.subtabs span { margin-right: 25px; line-height: 34px; height: 36px; }
.subtabs .on { color: #1b1815; font-weight: 600; border-bottom: 2px solid #56733f; letter-spacing: -.8px; }
.subtabs i { width: 1px; height: 22px; background: #d8d6d4; margin: 0 12px 0 -12px; }
.s1 { width: 80px; } .s2 { width: 41px; } .s3 { width: 85px; } .s4 { width: 37px; } .s5 { width: 31px; } .s6 { width: 51px; } .s7 { width: 56px; } .s8 { width: 30px; }
.panes { flex: 1; display: flex; min-height: 0; }
.vtabs { width: 37px; display: flex; flex-direction: column; background: #efeeec; }
.vtabs span { writing-mode: vertical-rl; transform: rotate(180deg); text-align: center; line-height: 35px; border-left: 1px solid #d8d6d4; color: #75716d; letter-spacing: -.4px; }
.comp { height: 104px; }
.vtabs .struct { height: 80px; background: #faf9f8; color: #1b1815; border: 0; box-shadow: 0 0 7px #0002; }
.rest { flex: 1; border-right: 1px solid #d8d6d4; }
.structure { width: 300px; border-right: 1px solid #d8d6d4; padding-left: 15px; }
.sfilter { display: flex; align-items: center; height: 42px; }
.sfilter .filter { width: 227px; }
.smenu { margin-left: 24px; color: #444; }
.stree { padding-top: 10px; font-weight: 500; font-size: 12.5px; letter-spacing: -.5px; color: #8a5a33; }
.stree li { height: 24px; display: flex; align-items: center; }
.stree .tw { width: 9px; color: #1b1815; margin-right: 14px; }
.stree .i { width: 15px; margin-right: 4px; color: #1b1815; }
.stree .olive { color: #6c672c; }
.l0 { padding-left: 7px; } .l1 { padding-left: 25px; } .l2 { padding-left: 43px; } .l3 { padding-left: 61px; } .l4 { padding-left: 79px; } .l5 { padding-left: 97px; }
.stree em { font-style: italic; font-weight: 400; color: #1b1815; margin-left: 7px; }
.slot { color: #e8771f; font-weight: 400; }

.design { width: 1200px; display: flex; flex-direction: column; }
.dbar { height: 41px; flex: none; display: flex; align-items: center; padding-left: 14px; font-family: Lato, sans-serif; letter-spacing: -.1px; }
.sep { width: 1px; height: 22px; background: #dedcda; margin: 0 15px; }
.person { margin: 0 16px 0 19px; }
.select { width: 100px; height: 28px; border: 1px solid #b4b2af; border-radius: 3px; display: flex; align-items: center; justify-content: space-between; padding: 0 12px; font-weight: 700; letter-spacing: -.3px; }
.sq { width: 28px; height: 28px; border: 1px solid #b4b2af; border-radius: 3px; display: flex; align-items: center; justify-content: center; margin: 0 9px 0 6px; }
.num { width: 48px; height: 28px; border: 1px solid #b4b2af; border-radius: 3px; background: #fff; padding-left: 9px; line-height: 27px; font-size: 13px; letter-spacing: -.4px; }
.wide { width: 54px; }
.times { width: 18px; text-align: center; font-size: 14px; }
.off { background: #ebeae9; color: #b4b2af; margin-right: 22px; }
.zoom { width: 42px; font-weight: 700; letter-spacing: -.5px; }
.modes { margin: 0 7px 0 auto; width: 171px; height: 28px; border: 1px solid #a9a7a5; border-radius: 4px; display: flex; background: #ebeae9; color: #75716d; text-align: center; line-height: 26px; font-family: "Noto Sans", sans-serif; letter-spacing: -.4px; }
.modes b { width: 50px; background: #7fbb60; color: #1b1815; outline: 1px dotted #000; outline-offset: 1px; }
.modes span { width: 65px; }
.modes span + span { width: 54px; border-left: 1px solid #a9a7a5; }
.canvas { flex: 1; border: 2px solid #7db85c; background: #e4e1dc; padding: 131px 0 0 381px; }

.phone { width: 434px; height: 886px; background: #000; border-radius: 70px; padding: 20px 22px 22px; font: bold 14px/1.2 "Liberation Sans", sans-serif; letter-spacing: 0; }
.screen { height: 844px; background: #faf9f8; border-radius: 54px; overflow: hidden; display: flex; flex-direction: column; }
.phead { height: 81px; background: #fff; border-bottom: 1px solid #e4e4e4; display: flex; flex-direction: column; font-size: 20px; font-weight: 400; }
.phead span { margin: 9px 0 0 16px; }
.notch { align-self: center; }
.pbody { flex: 1; display: flex; flex-direction: column; align-items: center; gap: 8px; padding-top: 3px; }
.card { background: #fff; border: 1px solid #e6e5e4; border-radius: 6px; }
.c1 { width: 224px; height: 70px; display: flex; align-items: center; padding-left: 25px; gap: 16px; }
.missing { width: 100px; height: 50px; border: 1px solid #aaa; border-width: 0 1px; font: 49px/58px "Noto Sans", sans-serif; color: #777; text-align: center; padding-right: 3px; background: repeating-linear-gradient(45deg, #fff 0 8px, #d3d3d3 15px 20px, #fff 29px 31px); overflow: hidden; }
.c2 { width: 174px; height: 70px; padding: 8px; }
.c2 span { display: block; height: 52px; line-height: 50px; text-align: center; border: 1px solid #aeadab; border-radius: 4px; letter-spacing: -.1px; }
.c3 { width: 94px; height: 518px; text-align: center; padding-top: 22px; }
.ptabs { height: 68px; flex: none; background: #fff; border-top: 1px solid #e4e4e4; display: flex; font-size: 12px; color: #757873; }
.ptabs span { flex: 1 1 auto; display: flex; flex-direction: column; align-items: center; padding-top: 7px; gap: 1px; }
.ptabs .on { color: #729f70; }

.props { width: 310px; border-left: 1px solid #dedcda; padding: 0 15px 0 14px; }
.ptitle { height: 42px; display: flex; align-items: center; justify-content: space-between; padding-right: 9px; }
.pnav { height: 30px; border-bottom: 1px solid #dedcda; display: flex; gap: 15px; color: #75716d; line-height: 24px; }
.pnav .on { color: #1b1815; border-bottom: 2px solid #56733f; height: 30px; }
.props label { display: block; margin-top: 20px; height: 20px; color: #75716d; }
.layouts { display: flex; gap: 10px; }
.layouts span { width: 70px; height: 70px; background: #ebeae9; border: 1px solid #a9a7a5; display: flex; flex-direction: column; align-items: center; padding-top: 10px; gap: 9px; }
.layouts .sel { background: #faf9f8; }
.ptab { flex: 1; display: flex; flex-direction: column; }
.ptab span { height: 81px; writing-mode: vertical-rl; line-height: 36px; padding-top: 13px; letter-spacing: -.4px; box-shadow: 0 4px 6px #0002; }
.ptab div { flex: 1; background: #efeeec; border-left: 1px solid #cbc9c7; }

.status { height: 36px; flex: none; border-top: 1px solid #a9a7a5; display: flex; align-items: center; padding-left: 14px; }
.status span { color: #75716d; margin-left: 12px; }
.f1 { width: 64px; } .f2 { width: 95px; } .f3 { width: 56px; } .f4 { width: 60px; }

.dock { position: absolute; left: 410px; top: 1368px; width: 1340px; height: 68px; border-radius: 18px; background: #aeadaaf5; box-shadow: 0 0 14px #0004; display: flex; align-items: center; padding-left: 16px; }
.dock > span { width: 54px; display: flex; justify-content: center; flex: none; }
.dock span > svg { width: 42px; height: 42px; filter: drop-shadow(0 1px 1px #0004); }
.dock span > .big { width: 45px; height: 45px; }
.dock span > .huge { width: 48px; height: 48px; }
.tv { font: 15px "Noto Sans", sans-serif; fill: #ddd; }
.dock > .cal { width: 42px; height: 42px; margin: 0 6px; border-radius: 9px; overflow: hidden; background: #fff; flex-direction: column; justify-content: flex-start; align-items: center; font-family: Roboto, sans-serif; letter-spacing: 0; }
.cal b { background: #f04b49; color: #fff; width: 42px; text-align: center; font: 11px/13px Roboto, sans-serif; }
.cal i { font: 300 25px/29px Roboto, sans-serif; color: #222; }
.div { width: 1px; height: 44px; background: #d0cfcd; margin: 0 3px 0 5px; }
.thin { margin: 0 2px 0 0; }
.run { position: absolute; width: 3px; height: 3px; border-radius: 50%; background: #3f7df0; top: 65px; }
.r1 { left: 474px; } .r2 { left: 526px; } .r3 { left: 531px; } .r4 { left: 1068px; } .r5 { left: 1130px; }
```
